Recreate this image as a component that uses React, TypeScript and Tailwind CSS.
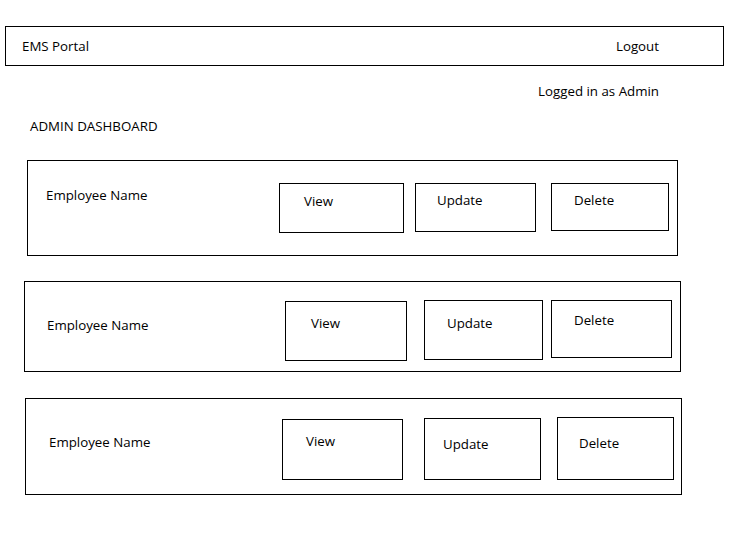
import React from "react";

type Btn = { label: string; box: string; text: string };
type Row = { card: string; name: string; buttons: Btn[] };

const rows: Row[] = [
    {
        card: "mt-[25px] ml-[27px] w-[651px] h-[96px] pl-[18px] pt-[22px]",
        name: "w-[233px] mt-[4px]",
        buttons: [
            { label: "View", box: "w-[125px] h-[50px]", text: "pl-[24px] pt-[9px]" },
            { label: "Update", box: "ml-[11px] w-[121px] h-[49px]", text: "pl-[21px] pt-[8px]" },
            { label: "Delete", box: "ml-[15px] w-[118px] h-[48px]", text: "pl-[22px] pt-[8px]" },
        ],
    },
    {
        card: "mt-[25px] ml-[24px] w-[657px] h-[91px] pl-[22px] pt-[18px]",
        name: "w-[238px] mt-[17px]",
        buttons: [
            { label: "View", box: "mt-[1px] w-[122px] h-[60px]", text: "pl-[25px] pt-[13px]" },
            { label: "Update", box: "ml-[17px] w-[119px] h-[60px]", text: "pl-[22px] pt-[14px]" },
            { label: "Delete", box: "ml-[8px] w-[121px] h-[58px]", text: "pl-[22px] pt-[11px]" },
        ],
    },
    {
        card: "mt-[26px] ml-[25px] w-[657px] h-[97px] pl-[23px] pt-[18px]",
        name: "w-[233px] mt-[17px]",
        buttons: [
            { label: "View", box: "mt-[2px] w-[121px] h-[61px]", text: "pl-[23px] pt-[13px]" },
            { label: "Update", box: "mt-[1px] ml-[21px] w-[117px] h-[62px]", text: "pl-[18px] pt-[17px]" },
            { label: "Delete", box: "ml-[16px] w-[117px] h-[63px]", text: "pl-[21px] pt-[17px]" },
        ],
    },
];

export default function App() {
    return (
        <div className="w-[735px] h-[533px] bg-white text-black text-[13.3px] leading-[17px] font-['Open_Sans',sans-serif] overflow-hidden">
            <div className="pt-[26px] pl-[5px]">
                <div className="w-[719px] h-[40px] border border-black flex items-center justify-between pl-[16px] pr-[64px]">
                    <span>EMS Portal</span>
                    <span>Logout</span>
                </div>
            </div>

            <div className="mt-[17px] pr-[76px] text-right">Logged in as Admin</div>
            <div className="mt-[18px] pl-[30px]">ADMIN DASHBOARD</div>

            {rows.map((row, i) => (
                <div key={i} className={`border border-black flex items-start ${row.card}`}>
                    <div className={row.name}>Employee Name</div>
                    {row.buttons.map((b) => (
                        <div key={b.label} className={`border border-black shrink-0 ${b.box}`}>
                            <div className={b.text}>{b.label}</div>
                        </div>
                    ))}
                </div>
            ))}
        </div>
    );
}
